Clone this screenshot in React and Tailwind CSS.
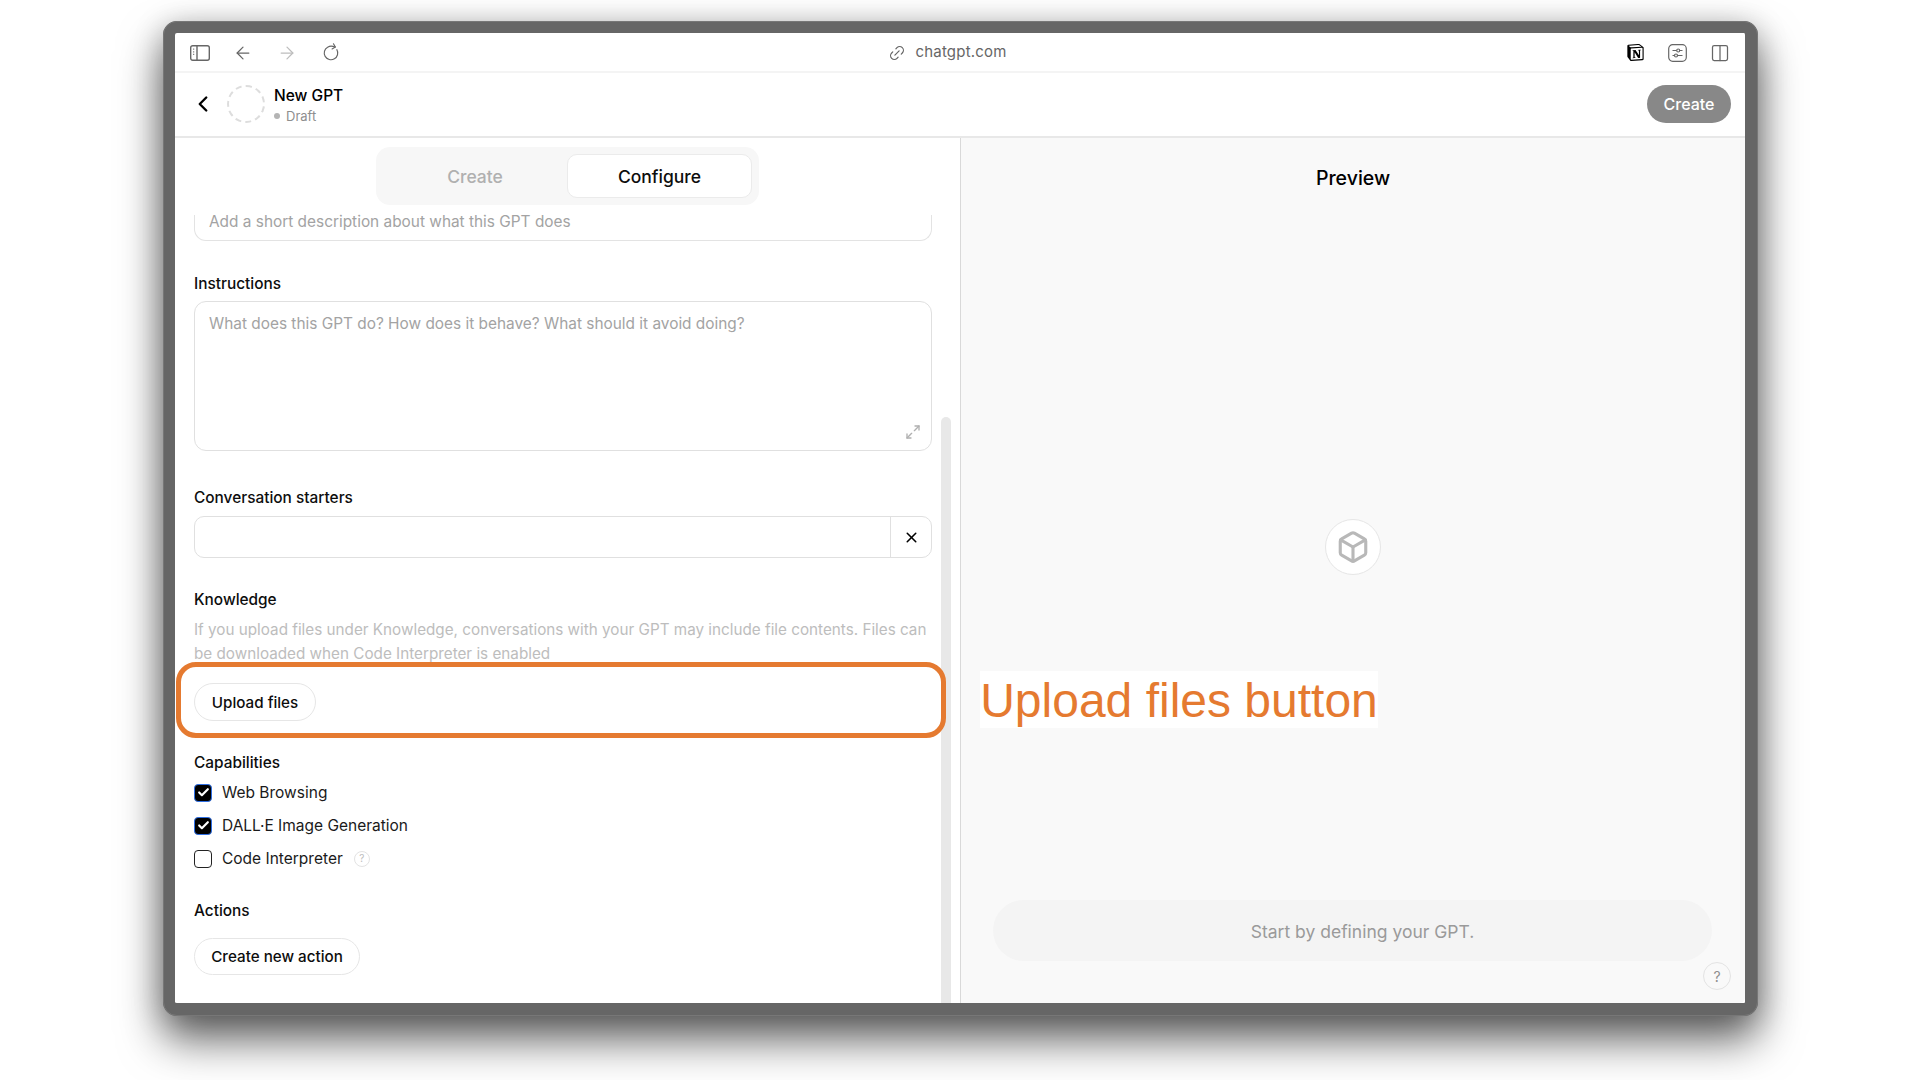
import { ArrowLeft, ArrowRight, RotateCw, Link2, ChevronLeft, X, Box, Maximize2, Columns2, Check } from 'lucide-react'
import { SiNotion } from 'react-icons/si'

function SidebarIcon() {
  return (
    <svg width="20" height="16" viewBox="0 0 20 16" fill="none" stroke="#666" strokeWidth="1.4">
      <rect x="0.7" y="0.7" width="18.6" height="14.6" rx="2" />
      <path d="M7 1v14" />
      <path d="M3.2 4.2h1M3.2 6.8h1M3.2 9.4h1" strokeWidth="1.2" />
    </svg>
  )
}

function SlidersIcon() {
  return (
    <svg width="19" height="18" viewBox="0 0 19 18" fill="none" stroke="#666" strokeWidth="1.2">
      <rect x="0.7" y="0.7" width="17.6" height="16.6" rx="4" />
      <path d="M4.5 6.5h4M12 6.5h2.5M4.5 11.5h2M9.5 11.5h5" />
      <circle cx="10.2" cy="6.5" r="1.5" />
      <circle cx="8" cy="11.5" r="1.5" />
    </svg>
  )
}

function FieldLabel({ children, className }) {
  return <div className={`h-5 pt-[1px] text-[15.4px] leading-5 font-[550] text-[#0d0d0d] ${className}`}>{children}</div>
}

function Capability({ label, checked, help }) {
  return (
    <div className="h-[33px] flex items-center gap-[10px] text-[15.5px] text-[#1a1a1a]">
      {checked ? (
        <span className="w-[18px] h-[18px] rounded-[4px] bg-black border border-[#2f6fe4] flex items-center justify-center">
          <Check size={13} strokeWidth={4} color="#fff" />
        </span>
      ) : (
        <span className="w-[18px] h-[18px] rounded-[4px] border border-[#222]" />
      )}
      <span>{label}</span>
      {help && (
        <span className="ml-[1px] w-4 h-4 rounded-full border border-[#e3e3e3] text-[#bdbdbd] text-[10px] flex items-center justify-center">?</span>
      )}
    </div>
  )
}

function PillButton({ children, className }) {
  return (
    <button className={`rounded-full border border-[#e6e6e6] bg-white pt-[2px] text-[15.2px] font-[550] text-[#0d0d0d] flex items-center justify-center ${className}`}>
      {children}
    </button>
  )
}

export default function App() {
  return (
    <div className="h-screen w-screen overflow-hidden bg-white pl-[163px] pt-[21px] font-['Inter',sans-serif]">
      <div className="relative w-[1595px] h-[995px] rounded-[14px] border-[12px] border-r-[13px] border-b-[13px] border-[#666] outline outline-1 -outline-offset-1 outline-[#777] shadow-[0_24px_44px_rgba(0,0,0,0.6),0_4px_30px_rgba(0,0,0,0.22)] bg-white">
        <div className="h-full rounded-[6px] overflow-hidden flex flex-col bg-white">
          {/* browser bar */}
          <div className="h-[40px] shrink-0 border-b-2 border-[#f4f4f4] pl-[15px] pr-[15px] pt-[1px] flex items-center">
            <SidebarIcon />
            <ArrowLeft size={20} color="#666" strokeWidth={1.5} className="ml-[23px]" />
            <ArrowRight size={20} color="#bdbdbd" strokeWidth={1.5} className="ml-[24px]" />
            <RotateCw size={18} color="#666" strokeWidth={1.5} className="ml-[25px] rotate-[-30deg]" />
            <div className="flex-1 flex items-center justify-center gap-[9px] pr-[72px]">
              <Link2 size={18} color="#666" strokeWidth={1.6} className="-rotate-45" />
              <span className="text-[15px] tracking-[0.2px] text-[#666]">chatgpt.com</span>
            </div>
            <SiNotion size={17} color="#000" />
            <span className="ml-[24px] flex"><SlidersIcon /></span>
            <Columns2 size={20} color="#666" strokeWidth={1.5} className="ml-[23px]" />
          </div>

          {/* gpt header */}
          <div className="h-[65px] shrink-0 border-b-2 border-[#e8e8e8] pl-[15px] pr-[14px] pb-[2px] flex items-center">
            <ChevronLeft size={26} color="#000" strokeWidth={2.2} />
            <div className="ml-[11px] w-[38px] h-[38px] rounded-full border-2 border-dashed border-[#ddd]" />
            <div className="ml-[9px] flex-1 pt-[3px]">
              <div className="text-[15.5px] leading-5 font-[550] text-black">New GPT</div>
              <div className="mt-[2px] flex items-center gap-[6px] text-[13px] leading-4 text-[#8e8e8e]">
                <span className="w-[6px] h-[6px] rounded-full bg-[#b4b4b4]" />
                Draft
              </div>
            </div>
            <button className="w-[84px] h-[38px] rounded-full bg-[#888] text-white text-[16px] font-medium">Create</button>
          </div>

          <div className="flex-1 flex min-h-0">
            {/* left panel */}
            <div className="relative w-[786px] shrink-0 border-r border-[#d9d9d9] flex flex-col overflow-hidden">
              <div className="h-[77px] shrink-0 pt-[9px] flex justify-center">
                <div className="w-[383px] h-[58px] rounded-[14px] bg-[#f7f7f7] px-[7px] flex items-center text-[17.5px] font-medium">
                  <div className="flex-1 pt-[3px] text-center text-[#b0b0b0]">Create</div>
                  <div className="w-[185px] h-[44px] pt-[3px] rounded-[10px] bg-white border border-[#ebebeb] flex items-center justify-center text-[#0d0d0d]">Configure</div>
                </div>
              </div>

              <div className="pl-[19px] w-[757px]">
                <div className="h-[26px] border-x border-b border-[#e3e3e3] rounded-b-[12px] pl-[14px] pt-[1px] text-[15.4px] leading-[12px] text-[#a3a3a3]">
                  Add a short description about what this GPT does
                </div>

                <FieldLabel className="mt-[32px]">Instructions</FieldLabel>
                <div className="relative mt-[8px] h-[150px] border border-[#e0e0e0] rounded-[12px] pl-[14px] pt-[10px] text-[15.4px] leading-6 text-[#a3a3a3]">
                  What does this GPT do? How does it behave? What should it avoid doing?
                  <Maximize2 size={16} color="#b0b0b0" strokeWidth={2} className="absolute right-[10px] bottom-[10px]" />
                </div>

                <FieldLabel className="mt-[36px]">Conversation starters</FieldLabel>
                <div className="mt-[9px] h-[42px] border border-[#e0e0e0] rounded-[10px] flex justify-end">
                  <div className="w-[41px] border-l border-[#e0e0e0] flex items-center justify-center">
                    <X size={17} color="#000" strokeWidth={2.2} />
                  </div>
                </div>

                <FieldLabel className="mt-[31px]">Knowledge</FieldLabel>
                <p className="mt-[9px] h-[47px] text-[15.25px] leading-[24px] text-[#bdbdbd]">
                  If you upload files under Knowledge, conversations with your GPT may include file contents. Files can be downloaded when Code Interpreter is enabled
                </p>
                <PillButton className="mt-[18px] w-[122px] h-[38px]">Upload files</PillButton>

                <FieldLabel className="mt-[31px]">Capabilities</FieldLabel>
                <div className="mt-[4px]">
                  <Capability label="Web Browsing" checked />
                  <Capability label="DALL·E Image Generation" checked />
                  <Capability label="Code Interpreter" help />
                </div>

                <FieldLabel className="mt-[25px]">Actions</FieldLabel>
                <PillButton className="mt-[18px] w-[166px] h-[37px]">Create new action</PillButton>
              </div>

              {/* scrollbar */}
              <div className="absolute left-[766px] top-[279px] bottom-0 w-[10px] rounded-t-full bg-[#e8e8e8]" />
            </div>

            {/* preview */}
            <div className="relative flex-1 bg-[#f9f9f9] flex flex-col">
              <div className="pt-[28px] text-center text-[19.5px] leading-6 font-[550] text-black">Preview</div>
              <div className="flex-1 flex items-center justify-center pt-[3px]">
                <div className="w-[56px] h-[56px] rounded-full border border-[#e6e6e6] bg-white flex items-center justify-center">
                  <Box size={34} color="#b8b8b8" strokeWidth={2.2} />
                </div>
              </div>
              <div className="ml-[32px] mr-[33px] mb-[42px] h-[61px] rounded-full bg-[#f4f4f4] pl-[20px] pt-[3px] flex items-center justify-center text-[17.5px] text-[#9a9a9a]">
                Start by defining your GPT.
              </div>
              <div className="absolute right-[14px] bottom-[13px] w-[28px] h-[28px] rounded-full border border-[#e3e3e3] flex items-center justify-center text-[14px] text-[#8e8e8e]">?</div>
            </div>
          </div>
        </div>

        {/* annotation */}
        <div className="absolute left-[1px] top-[629px] w-[770px] h-[76px] rounded-[20px] border-[5px] border-[#e57a30]" />
        <div className="absolute left-[805px] top-[638px] w-[398px] h-[57px] pt-[2px] bg-white flex items-center justify-center font-['Liberation_Sans',sans-serif] text-[48px] text-[#e57a30]">
          Upload files button
        </div>
      </div>
    </div>
  )
}
